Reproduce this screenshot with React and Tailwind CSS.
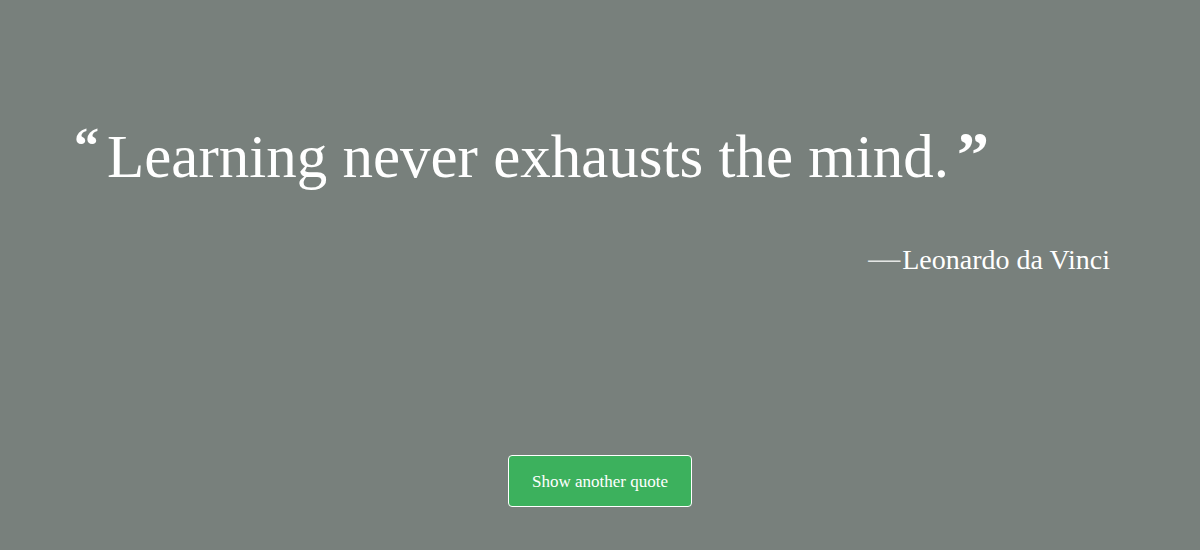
export default function App() {
  return (
    <div className="flex min-h-screen flex-col bg-[#78807c] font-['Liberation_Serif',serif] text-white">
      <main className="flex grow flex-col px-[90px] pt-[117px]">
        <blockquote className="flex items-start">
          <span aria-hidden="true" className="-ml-4 mr-2 text-[50px] font-bold leading-[56px]">“</span>
          <p className="text-[61px] leading-[80px]">
            Learning never exhausts the mind.
          </p>
          <span aria-hidden="true" className="ml-2 text-[64px] font-bold leading-[76px]">”</span>
        </blockquote>
        <p className="mt-[41px] flex items-baseline justify-end text-[28px] leading-10">
          <span className="mr-0.5 text-[32px] leading-10 text-white/80">—</span>
          Leonardo da Vinci
        </p>
      </main>
      <footer className="flex justify-center pb-[43px]">
        <button type="button" className="rounded-sm border border-white bg-[#3cb15d] px-[23px] pt-[13px] pb-3 text-[17px] leading-[25px]">
          Show another quote
        </button>
      </footer>
    </div>
  );
}
